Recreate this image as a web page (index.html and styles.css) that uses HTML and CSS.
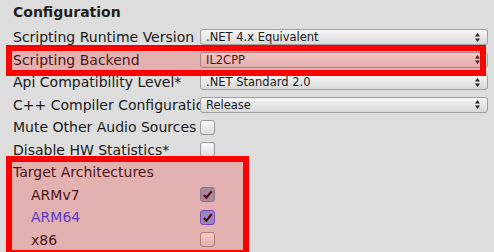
FILE: index.html
```html
<!DOCTYPE html>
<html>
<head>
  <meta charset="utf-8">
  <title>Player Settings - Configuration</title>
  <link rel="stylesheet" href="styles.css">
</head>
<body>
  <div id="panel">
    <h2 class="section-title">Configuration</h2>

    <div class="row">
      <div class="label">Scripting Runtime Version</div>
      <div class="popup"><span>.NET 4.x Equivalent</span><svg class="arrows" viewBox="0 0 5 9"><path d="M2.5 0L5 3.5H0Z M2.5 9L5 5.5H0Z"/></svg></div>
    </div>
    <div class="row">
      <div class="label">Scripting Backend</div>
      <div class="popup"><span>IL2CPP</span><svg class="arrows" viewBox="0 0 5 9"><path d="M2.5 0L5 3.5H0Z M2.5 9L5 5.5H0Z"/></svg></div>
    </div>
    <div class="row">
      <div class="label">Api Compatibility Level*</div>
      <div class="popup"><span>.NET Standard 2.0</span><svg class="arrows" viewBox="0 0 5 9"><path d="M2.5 0L5 3.5H0Z M2.5 9L5 5.5H0Z"/></svg></div>
    </div>
    <div class="row">
      <div class="label">C++ Compiler Configuration</div>
      <div class="popup"><span>Release</span><svg class="arrows" viewBox="0 0 5 9"><path d="M2.5 0L5 3.5H0Z M2.5 9L5 5.5H0Z"/></svg></div>
    </div>
    <div class="row">
      <div class="label">Mute Other Audio Sources</div>
      <div class="toggle"></div>
    </div>
    <div class="row">
      <div class="label">Disable HW Statistics*</div>
      <div class="toggle"></div>
    </div>
    <div class="row">
      <div class="label">Target Architectures</div>
    </div>
    <div class="row">
      <div class="label sub">ARMv7</div>
      <div class="toggle checked"><svg viewBox="0 0 14 14"><path d="M3 7.5L5.8 10.5L11.5 3.5"/></svg></div>
    </div>
    <div class="row">
      <div class="label sub modified">ARM64</div>
      <div class="toggle checked focused"><svg viewBox="0 0 14 14"><path d="M3 7.5L5.8 10.5L11.5 3.5"/></svg></div>
    </div>
    <div class="row">
      <div class="label sub">x86</div>
      <div class="toggle"></div>
    </div>

    <!-- highlight boxes drawn over the inspector -->
    <div class="highlight backend"></div>
    <div class="highlight archs"></div>
  </div>
</body>
</html>
```

FILE: styles.css
```css
html, body {
  margin: 0;
  height: 100%;
  overflow: hidden;
}
body {
  background: #dedede;
  font-family: "DejaVu Sans", Verdana, sans-serif;
  font-size: 14px;
  color: #191919;
}
#panel {
  position: relative;
  padding-left: 13px;
}
.section-title {
  margin: 0;
  height: 25.75px;
  line-height: 24px;
  font-size: 14px;
  font-weight: bold;
  color: #1e1e1e;
}
.row {
  display: flex;
  align-items: center;
  height: 22.5px;
}
.label {
  width: 187px;
  flex: none;
  white-space: nowrap;
  overflow: hidden;
}
.label.sub {
  padding-left: 18px;
  width: 169px;
}
.label.modified {
  color: #3048ff;
}
.popup {
  display: flex;
  align-items: center;
  justify-content: space-between;
  box-sizing: border-box;
  width: 288px;
  height: 16px;
  padding: 0 7px 0 5px;
  border: 1px solid #a0a0a0;
  border-radius: 3px;
  background: linear-gradient(#f6f6f6, #d9d9d9);
  font-size: 11.5px;
  color: #1a1a1a;
}
.popup .arrows {
  width: 5px;
  height: 9px;
  fill: #222;
}
.toggle {
  box-sizing: border-box;
  width: 15px;
  height: 15px;
  border: 1px solid #9a9a9a;
  border-radius: 3px;
  background: linear-gradient(#fbfbfb, #dcdcdc);
}
.toggle svg {
  display: block;
  width: 13px;
  height: 13px;
  fill: none;
  stroke: #300008;
  stroke-width: 2.2;
}
.toggle.checked {
  background: #8eb0c8;
  border-color: #7a8ea6;
}
.toggle.focused {
  background: #7ca8f2;
  border-color: #5a5ae0;
}
.highlight {
  position: absolute;
  border: 6px solid #ff0000;
  background: rgba(255, 0, 0, 0.2);
  box-sizing: border-box;
}
.highlight.backend {
  left: 6px;
  top: 45px;
  width: 480px;
  height: 31px;
}
.highlight.archs {
  left: 6px;
  top: 156px;
  width: 243px;
  height: 100px;
}
```
